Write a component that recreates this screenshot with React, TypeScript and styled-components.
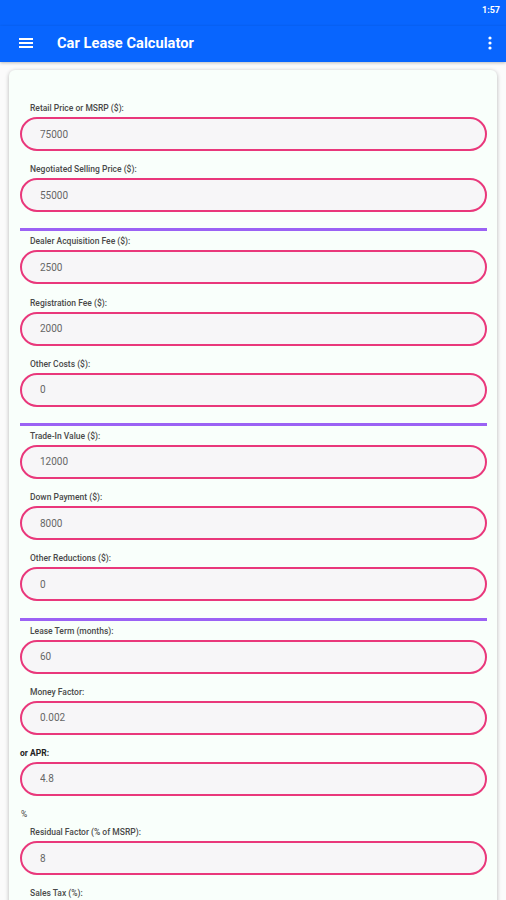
import React from "react";
import styled, { createGlobalStyle } from "styled-components";

const Global = createGlobalStyle`
  html, body { margin: 0; padding: 0; background: #fbfbfb; }
  body { font-family: Roboto, "Noto Sans", Arial, sans-serif; overflow: hidden; }
  * { box-sizing: border-box; }
`;

const Page = styled.div`
  width: 506px;
  min-height: 900px;
  background: #fbfbfb;
`;

const StatusBar = styled.div`
  height: 26px;
  background: #0865fe;
  display: flex;
  justify-content: flex-end;
  align-items: center;
  padding: 0 6px 6px 0;
  color: #fff;
  font-size: 9px;
  font-weight: 700;
`;

const AppBar = styled.header`
  height: 36px;
  background: #0865fe;
  display: flex;
  align-items: center;
  padding: 0 14px 2px 19px;
  box-shadow: 0 1px 3px rgba(0, 0, 0, 0.25);
  position: relative;
  z-index: 1;
`;

const Title = styled.h1`
  margin: 0 0 0 24px;
  flex: 1;
  color: #fff;
  font-size: 14.6px;
  font-weight: 700;
  letter-spacing: 0.05px;
`;

const IconButton = styled.span`
  display: flex;
  align-items: center;
  justify-content: center;
`;

const Card = styled.section`
  margin: 8px 9px 0 9px;
  background: #f9fffb;
  border-radius: 6px;
  box-shadow: 0 1px 4px rgba(0, 0, 0, 0.28);
  padding: 33px 10px 20px 11px;
  display: flex;
  flex-direction: column;
`;

const FieldBox = styled.div`
  display: flex;
  flex-direction: column;
`;

const Label = styled.label<{ $flush?: boolean }>`
  display: block;
  font-size: 8.5px;
  line-height: 11px;
  font-weight: ${(p) => (p.$flush ? 700 : 500)};
  color: ${(p) => (p.$flush ? "#222" : "#4a4a4a")};
  padding-left: ${(p) => (p.$flush ? "0" : "10px")};
  margin-bottom: 3px;
`;

const Note = styled.div`
  font-size: 8.5px;
  line-height: 11px;
  color: #444;
  padding-left: 1px;
  margin: 0 0 7px;
`;

const Input = styled.input`
  display: block;
  width: 100%;
  height: 34px;
  border: 2px solid #e9387b;
  border-radius: 17px;
  background: #f7f6f8;
  padding: 0 18px;
  font-family: Roboto, "Noto Sans", Arial, sans-serif;
  font-size: 10px;
  color: #666;
  margin-bottom: 13.2px;
  outline: none;
`;

const Divider = styled.hr`
  border: 0;
  height: 3px;
  background: #9b62f4;
  margin: 3px 0 5px;
  width: 100%;
`;

type F = { label: string; value: string; flush?: boolean };

const groups: F[][] = [
  [
    { label: "Retail Price or MSRP ($):", value: "75000" },
    { label: "Negotiated Selling Price ($):", value: "55000" },
  ],
  [
    { label: "Dealer Acquisition Fee ($):", value: "2500" },
    { label: "Registration Fee ($):", value: "2000" },
    { label: "Other Costs ($):", value: "0" },
  ],
  [
    { label: "Trade-In Value ($):", value: "12000" },
    { label: "Down Payment ($):", value: "8000" },
    { label: "Other Reductions ($):", value: "0" },
  ],
];

const Field = ({ label, value, flush }: F) => (
  <FieldBox>
    <Label $flush={flush}>{label}</Label>
    <Input defaultValue={value} />
  </FieldBox>
);

export default function App() {
  return (
    <Page>
      <Global />
      <StatusBar>1:57</StatusBar>
      <AppBar>
        <IconButton>
          <svg width="14" height="12" viewBox="0 0 14 12">
            <rect x="0" y="1" width="14" height="2" fill="#fff" />
            <rect x="0" y="5" width="14" height="2" fill="#fff" />
            <rect x="0" y="9" width="14" height="2" fill="#fff" />
          </svg>
        </IconButton>
        <Title>Car Lease Calculator</Title>
        <IconButton>
          <svg width="4" height="14" viewBox="0 0 4 14">
            <circle cx="2" cy="2" r="1.6" fill="#fff" />
            <circle cx="2" cy="7" r="1.6" fill="#fff" />
            <circle cx="2" cy="12" r="1.6" fill="#fff" />
          </svg>
        </IconButton>
      </AppBar>
      <Card>
        {groups.map((g, i) => (
          <React.Fragment key={i}>
            {g.map((f) => (
              <Field key={f.label} {...f} />
            ))}
            <Divider />
          </React.Fragment>
        ))}
        <Field label="Lease Term (months):" value="60" />
        <Field label="Money Factor:" value="0.002" />
        <Field label="or APR:" value="4.8" flush />
        <Note>%</Note>
        <Field label="Residual Factor (% of MSRP):" value="8" />
        <Field label="Sales Tax (%):" value="7" />
      </Card>
    </Page>
  );
}
